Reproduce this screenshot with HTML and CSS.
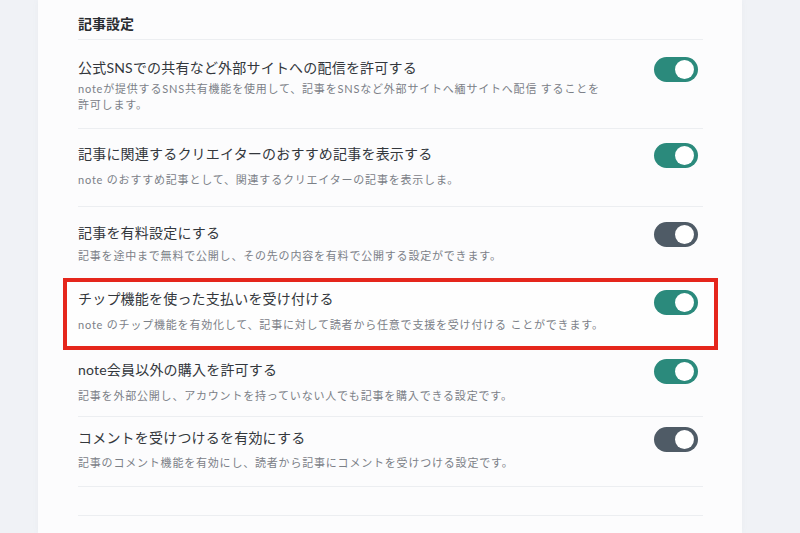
FILE: index.html
```html
<!DOCTYPE html>
<html lang="ja">
<head>
<meta charset="utf-8">
<title>記事設定</title>
<link rel="stylesheet" href="styles.css">
</head>
<body>
<main class="page">
  <section class="card">
    <h2 class="section-title">記事設定</h2>
    <ul class="settings">
      <li class="setting setting--wrap">
        <div class="text">
          <p class="label">公式SNSでの共有など外部サイトへの配信を許可する</p>
          <p class="desc">noteが提供するSNS共有機能を使用して、記事をSNSなど外部サイトへ緬サイトへ配信 することを<br>許可します。</p>
        </div>
        <span class="toggle toggle--on"></span>
      </li>
      <li class="setting">
        <div class="text">
          <p class="label">記事に関連するクリエイターのおすすめ記事を表示する</p>
          <p class="desc">note のおすすめ記事として、関連するクリエイターの記事を表示しま。</p>
        </div>
        <span class="toggle toggle--on"></span>
      </li>
      <li class="setting setting--before-hl">
        <div class="text">
          <p class="label">記事を有料設定にする</p>
          <p class="desc desc--tight">記事を途中まで無料で公開し、その先の内容を有料で公開する設定ができます。</p>
        </div>
        <span class="toggle toggle--off"></span>
      </li>
      <li class="setting setting--highlight">
        <div class="text">
          <p class="label">チップ機能を使った支払いを受け付ける</p>
          <p class="desc">note のチップ機能を有効化して、記事に対して読者から任意で支援を受け付ける ことができます。</p>
        </div>
        <span class="toggle toggle--on"></span>
      </li>
      <li class="setting setting--after-hl">
        <div class="text">
          <p class="label">note会員以外の購入を許可する</p>
          <p class="desc">記事を外部公開し、アカウントを持っていない人でも記事を購入できる設定です。</p>
        </div>
        <span class="toggle toggle--on"></span>
      </li>
      <li class="setting setting--last">
        <div class="text">
          <p class="label">コメントを受けつけるを有効にする</p>
          <p class="desc desc--mid">記事のコメント機能を有効にし、読者から記事にコメントを受けつける設定です。</p>
        </div>
        <span class="toggle toggle--off"></span>
      </li>
      <li class="setting setting--empty"></li>
    </ul>
  </section>
</main>
</body>
</html>
```
FILE: styles.css
```css
html, body {
  margin: 0;
  padding: 0;
}

body {
  background: #f0f2f6;
  font-family: "Lato", "Noto Sans CJK JP", sans-serif;
  color: #30343a;
}

.page {
  height: 533px;
  overflow: hidden;
  padding-left: 38px;
}

.card {
  width: 625px;
  min-height: 533px;
  background: #fcfcfd;
  padding: 0 39px 0 40px;
  box-shadow: 0 0 6px rgba(120, 130, 150, 0.06);
}

.section-title {
  margin: 0;
  padding: 14px 0 5px;
  font-size: 14px;
  line-height: 20px;
  font-weight: 700;
  color: #2a2d31;
  border-bottom: 1px solid #eceef1;
}

.settings {
  list-style: none;
  margin: 0;
  padding: 0;
}

.setting {
  display: flex;
  justify-content: space-between;
  align-items: flex-start;
  padding: 13px 5px 18px 0;
  border-bottom: 1px solid #eceef1;
}

.text {
  min-width: 0;
}

.label {
  margin: 0;
  font-size: 14px;
  line-height: 24px;
  letter-spacing: 0.2px;
  color: #33373c;
}

.desc {
  margin: 6px 0 0;
  font-size: 11px;
  line-height: 16px;
  letter-spacing: 0.8px;
  color: #7b8087;
}

.desc--tight {
  margin-top: 3px;
}

.desc--mid {
  margin-top: 5px;
}

.setting--wrap {
  padding-top: 16px;
  padding-bottom: 15px;
}

.setting--wrap .desc {
  margin-top: 1px;
}

.setting--before-hl {
  padding-top: 14px;
  padding-bottom: 14px;
  border-bottom: 0;
}

.setting--highlight {
  margin: 0 -15px;
  padding: 5px 16px 13px 11px;
  border: 4px solid #e5261c;
  background: #fefefe;
}

.setting--highlight .toggle {
  margin-top: 3px;
}

.setting--after-hl {
  padding-top: 8px;
  padding-bottom: 12px;
}

.setting--last {
  padding-top: 9px;
  padding-bottom: 15px;
}

.setting--empty {
  height: 28px;
  padding: 0;
}

.toggle {
  position: relative;
  flex: none;
  width: 44px;
  height: 25px;
  margin-top: 1px;
  border-radius: 13px;
}

.toggle::after {
  content: "";
  position: absolute;
  top: 3px;
  right: 4px;
  width: 19px;
  height: 19px;
  border-radius: 50%;
  background: #ffffff;
}

.toggle--on {
  background: #2b8a7c;
}

.toggle--off {
  background: #4f5b66;
}
```
